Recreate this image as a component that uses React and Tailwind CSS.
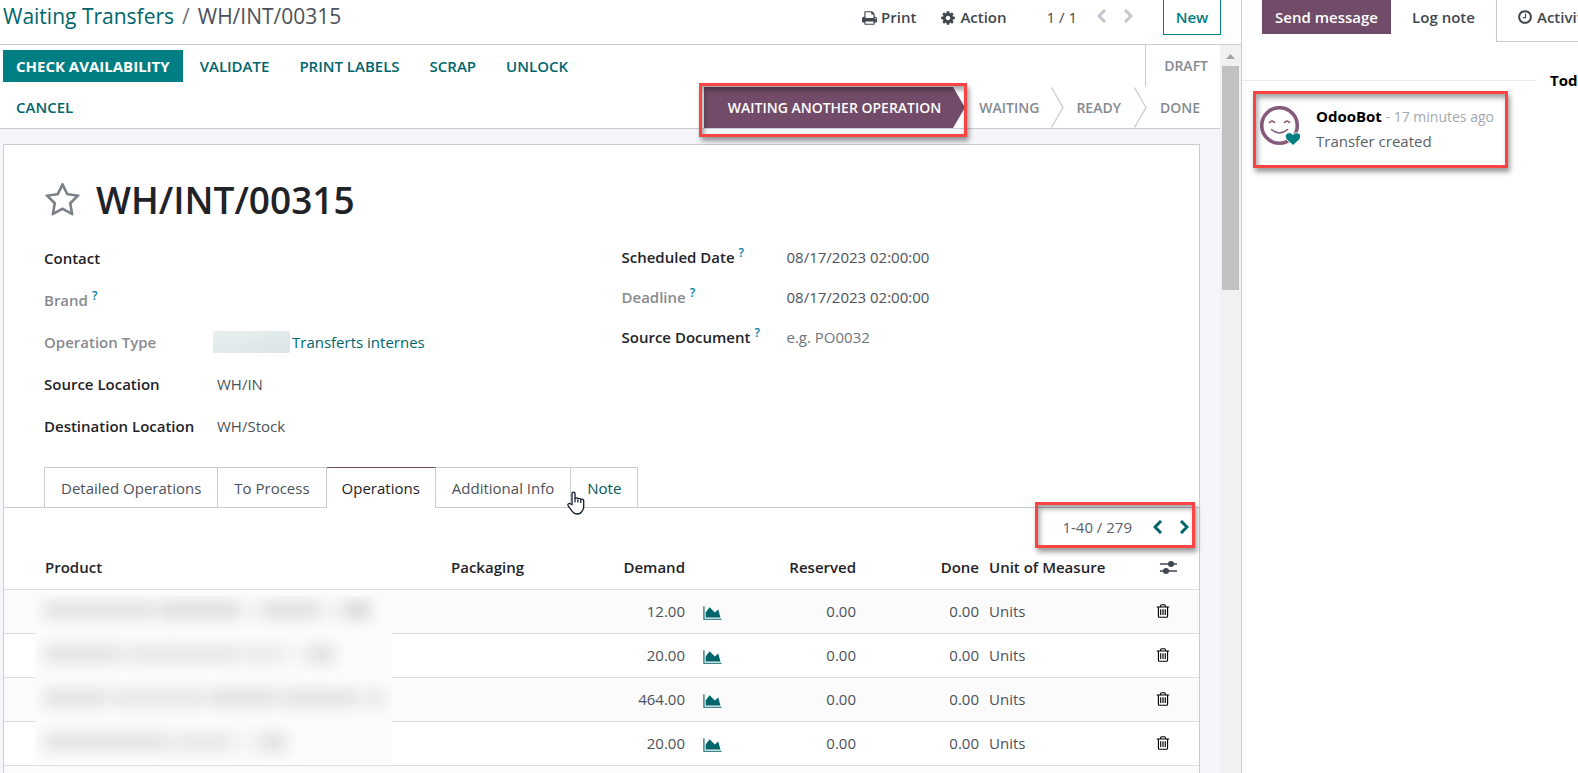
const PATHS = {
    print: 'M384 1536h896v-256h-896v256zm0-640h896v-384h-160q-40 0-68-28t-28-68v-160h-640v640zm1152 64q0-26-19-45t-45-19-45 19-19 45 19 45 45 19 45-19 19-45zm128 0v416q0 13-9.5 22.5t-22.5 9.5h-224v160q0 40-28 68t-68 28h-960q-40 0-68-28t-28-68v-160h-224q-13 0-22.5-9.5t-9.5-22.5v-416q0-79 56.5-135.5t135.5-56.5h64v-544q0-40 28-68t68-28h672q40 0 88 20t76 48l152 152q28 28 48 76t20 88v256h64q79 0 135.5 56.5t56.5 135.5z',
    cog: 'M1152 896q0-106-75-181t-181-75-181 75-75 181 75 181 181 75 181-75 75-181zm512-109v222q0 12-8 23t-20 13l-185 28q-19 54-39 91 35 50 107 138 10 12 10 25t-9 23q-27 37-99 108t-94 71q-12 0-26-9l-138-108q-44 23-91 38-16 136-29 186-7 28-36 28h-222q-14 0-24.5-8.5t-11.5-21.5l-28-184q-49-16-90-37l-141 107q-10 9-25 9-14 0-25-11-126-114-165-168-7-10-7-23 0-12 8-23 15-21 51-66.5t54-70.5q-27-50-41-99l-183-27q-13-2-21-12.5t-8-23.5v-222q0-12 8-23t19-13l186-28q14-46 39-92-40-57-107-138-10-12-10-24 0-10 9-23 26-36 98.5-107.5t94.5-71.5q13 0 26 10l138 107q44-23 91-38 16-136 29-186 7-28 36-28h222q14 0 24.5 8.5t11.5 21.5l28 184q49 16 90 37l142-107q9-9 24-9 13 0 25 10 129 119 165 170 7 8 7 22 0 12-8 23-15 21-51 66.5t-54 70.5q26 50 41 98l183 28q13 2 21 12.5t8 23.5z',
    star: 'M1201 1004l306-297-422-62-189-382-189 382-422 62 306 297-73 421 378-199 377 199zm527-357q0 22-26 48l-363 354 86 500q1 7 1 20 0 50-41 50-19 0-40-12l-449-236-449 236q-22 12-40 12-21 0-31.5-14.5t-10.5-35.5q0-6 2-20l86-500-364-354q-25-27-25-48 0-37 56-46l502-73 225-455q19-41 49-41t49 41l225 455 502 73q56 9 56 46z',
    clock: 'M1024 544v448q0 14-9 23t-23 9h-320q-14 0-23-9t-9-23v-64q0-14 9-23t23-9h224v-352q0-14 9-23t23-9h64q14 0 23 9t9 23zm416 352q0-148-73-273t-198-198-273-73-273 73-198 198-73 273 73 273 198 198 273 73 273-73 198-198 73-273zm224 0q0 209-103 385.5t-279.5 279.5-385.5 103-385.5-103-279.5-279.5-103-385.5 103-385.5 279.5-279.5 385.5-103 385.5 103 279.5 279.5 103 385.5z',
    area: 'M2048 1536v128h-2048v-1536h128v1408h1920zm-384-1024l256 896h-1664v-576l448-576 576 576z',
    trash: 'M704 736v576q0 14-9 23t-23 9h-64q-14 0-23-9t-9-23v-576q0-14 9-23t23-9h64q14 0 23 9t9 23zm256 0v576q0 14-9 23t-23 9h-64q-14 0-23-9t-9-23v-576q0-14 9-23t23-9h64q14 0 23 9t9 23zm256 0v576q0 14-9 23t-23 9h-64q-14 0-23-9t-9-23v-576q0-14 9-23t23-9h64q14 0 23 9t9 23zm128 724v-948h-896v948q0 22 7 40.5t14.5 27 10.5 8.5h832q3 0 10.5-8.5t14.5-27 7-40.5zm-672-1076h448l-48-117q-7-9-17-11h-317q-10 2-17 11zm928 32v64q0 14-9 23t-23 9h-96v948q0 83-47 143.5t-113 60.5h-832q-66 0-113-58.5t-47-141.5v-952h-96q-14 0-23-9t-9-23v-64q0-14 9-23t23-9h309l70-167q15-37 54-63t79-26h320q40 0 79 26t54 63l70 167h309q14 0 23 9t9 23z',
};

const Icon = ({ name, box = '0 0 1792 1792', className }) => (
    <svg viewBox={box} fill="currentColor" className={className} aria-hidden="true">
        <path d={PATHS[name]} />
    </svg>
);

const Chevron = ({ right }) => (
    <svg viewBox="0 0 10 14" className="w-[10px] h-[14px]" fill="none" stroke="currentColor" strokeWidth="3" aria-hidden="true">
        <path d={right ? 'M2 1 L8 7 L2 13' : 'M8 1 L2 7 L8 13'} />
    </svg>
);

const StageArrow = () => (
    <svg viewBox="0 0 13 41" className="w-[13px] h-[41px] shrink-0" fill="none" stroke="#c9ccd2" strokeWidth="1.3" aria-hidden="true">
        <path d="M0.5 0.5 L12 20.5 L0.5 40.5" />
    </svg>
);

// Red callout frame, drawn over whatever it surrounds
const Callout = ({ className }) => (
    <span className={`absolute border-3 border-[#fa4444] pointer-events-none shadow-[2px_4px_5px_rgba(0,0,0,0.4),inset_2px_4px_5px_rgba(0,0,0,0.35)] ${className}`} />
);

const Help = () => <sup className="ml-1 -top-[6px] text-[12px] text-[#0180a5]">?</sup>;

const Label = ({ id, muted, help, children }) => (
    <label htmlFor={id} className={muted ? 'font-semibold text-[#888b90]' : 'font-semibold text-[#1f2328]'}>
        {children}
        {help && <Help />}
    </label>
);

const inputClass = 'w-full bg-transparent outline-none text-[#4c525a] placeholder:text-[#6f747b]';

const ACTIONS = ['Validate', 'Print Labels', 'Scrap', 'Unlock', 'Cancel'];

const TABS = ['Detailed Operations', 'To Process', 'Operations', 'Additional Info', 'Note'];

const LINES = [
    { demand: '12.00' },
    { demand: '20.00' },
    { demand: '464.00' },
    { demand: '20.00' },
];

function ControlBar() {
    return (
        <header className="h-[45px] shrink-0 flex items-start border-b border-[#c9ccd2] bg-white">
            <nav className="flex pl-[3px] text-[21px] leading-8 whitespace-nowrap">
                <a href="#transfers" className="text-[#01666b]">Waiting Transfers</a>
                <span className="px-2 text-[#6f747b]">/</span>
                <span className="text-[#4c525a]">WH/INT/00315</span>
            </nav>
            <div className="ml-auto mr-5 flex items-start font-semibold text-[#41474f] leading-[35px]">
                <button className="flex items-center gap-1 mr-6">
                    <Icon name="print" box="0 0 1664 1792" className="w-[15px] h-4" />
                    Print
                </button>
                <button className="flex items-center gap-1 mr-10">
                    <Icon name="cog" className="w-4 h-4" />
                    Action
                </button>
                <span className="font-normal mr-5">1 / 1</span>
                <div className="flex gap-4 h-8 items-center mr-[30px] text-[#c3c6cc]">
                    <button aria-label="Previous record"><Chevron /></button>
                    <button aria-label="Next record"><Chevron right /></button>
                </div>
                <button className="h-[35px] w-[58px] border border-t-0 border-[#017e84] text-[#017e84]">New</button>
            </div>
        </header>
    );
}

function StatusBar() {
    return (
        <div className="flex justify-between border-b border-[#c9ccd2] bg-white text-[15px] uppercase">
            <div className="flex flex-wrap content-start gap-y-[9px] gap-x-1 pt-[5px] pl-[3px] w-[640px] font-semibold text-[#01666b]">
                <button className="h-8 px-[13px] bg-[#017e84] text-white font-bold uppercase">Check Availability</button>
                {ACTIONS.map((a) => (
                    <button key={a} className="h-8 px-[13px] uppercase">{a}</button>
                ))}
            </div>
            <div className="flex flex-col items-end text-[14px] font-semibold text-[#858a91]">
                <button className="h-[42px] pl-[18px] pr-3 border-l border-[#c9ccd2] uppercase">Draft</button>
                <div className="flex h-[41px] items-center">
                    <div className="relative flex h-full">
                        <button className="h-full pl-6 pr-3 bg-[#714b67] text-white uppercase">
                            Waiting Another Operation
                        </button>
                        <svg viewBox="0 0 12 41" className="w-3 h-[41px]" fill="#714b67" aria-hidden="true">
                            <path d="M0 0 L12 20.5 L0 41 Z" />
                        </svg>
                        <Callout className="-left-[5px] -right-[2px] -top-1 -bottom-[9px]" />
                    </div>
                    <button className="pl-[14px] pr-3 uppercase">Waiting</button>
                    <StageArrow />
                    <button className="pl-3 pr-[13px] uppercase">Ready</button>
                    <StageArrow />
                    <button className="pl-[13px] pr-5 uppercase">Done</button>
                </div>
            </div>
        </div>
    );
}

function Fields() {
    return (
        <div className="grid grid-cols-2 px-10 pt-2 h-[238px]">
            <div className="grid grid-cols-[173px_1fr] auto-rows-[42px] items-center content-start">
                <Label id="contact">Contact</Label>
                <input id="contact" className={inputClass} />
                <Label id="brand" muted help>Brand</Label>
                <input id="brand" className={inputClass} />
                <Label id="optype" muted>Operation Type</Label>
                <div className="flex items-center gap-[2px] -ml-1">
                    <span className="w-[77px] h-[22px] rounded-xs bg-linear-to-br from-[#e9efef] to-[#dae5e6]" />
                    <a id="optype" href="#type" className="text-[#01666b]">Transferts internes</a>
                </div>
                <Label id="source">Source Location</Label>
                <input id="source" className={inputClass} defaultValue="WH/IN" />
                <Label id="dest">Destination Location</Label>
                <input id="dest" className={inputClass} defaultValue="WH/Stock" />
            </div>
            <div className="grid grid-cols-[165px_1fr] auto-rows-[40px] items-center content-start pl-5">
                <Label id="scheduled" help>Scheduled Date</Label>
                <input id="scheduled" className={inputClass} defaultValue="08/17/2023 02:00:00" />
                <Label id="deadline" muted help>Deadline</Label>
                <input id="deadline" className={inputClass} defaultValue="08/17/2023 02:00:00" readOnly />
                <Label id="origin" help>Source Document</Label>
                <input id="origin" className={inputClass} placeholder="e.g. PO0032" />
            </div>
        </div>
    );
}

function Tabs() {
    return (
        <div className="flex h-[41px] pl-10 border-b border-[#c9ccd2]">
            {TABS.map((tab) => {
                const active = tab === 'Operations';
                return (
                    <button
                        key={tab}
                        className={
                            active
                                ? 'relative h-[41px] px-[15px] bg-white border-t border-t-[#714b67] border-r border-r-[#c9ccd2] text-[#1f2328]'
                                : tab === 'Note'
                                    ? 'relative px-4 border-t border-r border-[#c9ccd2] text-[#01585c]'
                                    : 'relative px-4 border-t border-r border-[#c9ccd2] first:border-l text-[#4c525a]'
                        }
                    >
                        {tab}
                        {tab === 'Note' && <HandCursor />}
                    </button>
                );
            })}
        </div>
    );
}

const HandCursor = () => (
    <svg viewBox="0 0 18 24" className="absolute -left-1 top-[23px] w-[18px] h-6" aria-hidden="true">
        <path
            d="M5 13.500V2.600C5 0.500 8 0.500 8 2.600V8c0-1.500 2.900-1.500 2.900.3 0-1.400 2.900-1.300 2.900.6 0-1.300 2.900-1.100 2.900.9v6c0 2-.8 3.200-1.700 4.500-1 1.700-2.600 2.700-5 2.700-2.200 0-3.500-.8-4.800-2.600L1.200 14.800C.2 13 2.300 11.700 3.600 13Z"
            fill="#fff"
            stroke="#111827"
            strokeWidth="1.3"
        />
        <path d="M8 8v3.500M10.900 8.500v3M13.800 9v3" stroke="#111827" strokeWidth="1.200" />
    </svg>
);

// Product names are hidden behind a soft mask
const ProductMask = () => (
    <div className="absolute left-[31px] top-[50px] w-[357px] h-[167px] overflow-hidden bg-[#fcfcfc]" aria-hidden="true">
        <div className="flex flex-col gap-6 pl-2 pt-1 blur-[7px]">
            <div className="flex gap-1 h-5"><i className="w-28 bg-[#e3e4e5]" /><i className="w-20 bg-[#dfe0e1]" /><i className="w-4 bg-[#f0f0f0]" /><i className="w-14 bg-[#e0e1e2]" /><i className="w-4 bg-[#f0f0f0]" /><i className="w-7 bg-[#dadcde]" /></div>
            <div className="flex gap-1 h-5"><i className="w-20 bg-[#e4e5e6]" /><i className="w-28 bg-[#e7e8e9]" /><i className="w-10 bg-[#e9eaea]" /><i className="w-4 bg-[#f3f3f3]" /><i className="w-7 bg-[#e0e2e5]" /></div>
            <div className="flex gap-1 h-5"><i className="w-16 bg-[#e3e4e5]" /><i className="w-24 bg-[#e6e7e8]" /><i className="w-16 bg-[#e1e2e4]" /><i className="w-20 bg-[#e3e5e7]" /><i className="w-6 bg-[#eaeaeb]" /></div>
            <div className="flex gap-1 h-5"><i className="w-32 bg-[#e4e5e6]" /><i className="w-14 bg-[#e7e8e9]" /><i className="w-5 bg-[#f3f3f3]" /><i className="w-7 bg-[#e0e2e4]" /></div>
        </div>
    </div>
);

function Operations() {
    return (
        <>
            <div className="flex justify-end h-[38px] pr-1">
                <div className="relative flex items-center h-[38px] pl-[27px] pr-[6px] text-[#5b6168]">
                    <span className="mr-[21px]">1-40 / 279</span>
                    <div className="flex gap-4 text-[#01666b]">
                        <button aria-label="Previous page"><Chevron /></button>
                        <button aria-label="Next page"><Chevron right /></button>
                    </div>
                    <Callout className="left-0 right-0 -top-[6px] bottom-[-2px]" />
                </div>
            </div>
            <div className="relative">
                <table className="w-full table-fixed">
                    <colgroup>
                        <col />
                        <col className="w-[150px]" />
                        <col className="w-[100px]" />
                        <col className="w-[40px]" />
                        <col className="w-[131px]" />
                        <col className="w-[120px]" />
                        <col className="w-[158px]" />
                        <col className="w-[57px]" />
                    </colgroup>
                    <thead>
                        <tr className="h-[43px] border-b border-[#dcdee1] text-[#1f2328] text-left *:font-semibold">
                            <th className="pl-[41px]">Product</th>
                            <th className="pl-2">Packaging</th>
                            <th className="pr-2 text-right">Demand</th>
                            <th></th>
                            <th className="pr-2 text-right">Reserved</th>
                            <th className="pr-[5px] text-right">Done</th>
                            <th className="pl-[5px]">Unit of Measure</th>
                            <th className="pl-[18px]">
                                <button aria-label="Optional columns" className="block">
                                    <svg viewBox="0 0 17 14" className="w-[17px] h-[14px]" aria-hidden="true">
                                        <path d="M0 4h17M0 11h17" stroke="#41474f" strokeWidth="1.300" />
                                        <circle cx="11" cy="4" r="3" fill="#41474f" />
                                        <circle cx="6" cy="11" r="3" fill="#41474f" />
                                    </svg>
                                </button>
                            </th>
                        </tr>
                    </thead>
                    <tbody>
                        {LINES.map((line, i) => (
                            <tr key={i} className="h-[44px] border-b border-[#dcdee1] odd:bg-[#fbfbfb] text-[#4c525a]">
                                <td></td>
                                <td></td>
                                <td className="pr-2 text-right">{line.demand}</td>
                                <td className="pl-[10px]">
                                    <button aria-label="Forecast" className="block pt-1 text-[#01666b]">
                                        <Icon name="area" box="0 0 2048 1792" className="w-[19px] h-4" />
                                    </button>
                                </td>
                                <td className="pr-2 text-right">0.00</td>
                                <td className="pr-[5px] text-right">0.00</td>
                                <td className="pl-[5px]">Units</td>
                                <td className="pl-[13px]">
                                    <button aria-label="Delete line" className="block text-black">
                                        <Icon name="trash" className="w-4 h-4" />
                                    </button>
                                </td>
                            </tr>
                        ))}
                        <tr className="h-[44px] bg-[#fbfbfb]">
                            <td colSpan={8}></td>
                        </tr>
                    </tbody>
                </table>
                <ProductMask />
            </div>
        </>
    );
}

const Scrollbar = () => (
    <div className="w-[21px] shrink-0 bg-[#f1f1f1] flex flex-col items-center">
        <svg viewBox="0 0 21 21" className="w-[21px] h-[21px]" aria-hidden="true">
            <path d="M6 14 L10.500 9 L15 14 Z" fill="#a3a3a3" />
        </svg>
        <div className="w-[17px] h-[224px] bg-[#c1c1c1]" />
    </div>
);

function Chatter() {
    return (
        <aside className="w-[337px] shrink-0 overflow-hidden border-l border-[#c9ccd2] bg-white">
            <div className="flex h-[42px] pl-5 font-semibold text-[#41474f] whitespace-nowrap">
                <button className="h-[34px] w-[129px] shrink-0 bg-[#714b67] text-white">Send message</button>
                <button className="h-[34px] w-[105px] shrink-0">Log note</button>
                <button className="flex items-center gap-1 h-[42px] pl-5 pb-2 border-l border-b border-[#c9ccd2] shrink-0">
                    <Icon name="clock" className="w-4 h-4" />
                    Activities
                </button>
            </div>
            <div className="flex items-center mt-[26px] h-6 whitespace-nowrap">
                <hr className="w-[294px] shrink-0 border-[#e8eaed]" />
                <span className="pl-[14px] font-bold text-black">Today</span>
            </div>
            <div className="relative flex ml-[11px] -mt-px w-[255px] h-[77px] pl-[7px] pt-[13px]">
                <svg viewBox="0 0 40 40" className="w-10 h-10 mt-[2px] shrink-0" fill="none" role="img" aria-label="OdooBot">
                    <circle cx="19.500" cy="19.500" r="17.800" stroke="#875a7b" strokeWidth="3.600" />
                    <path d="M9.500 16.500q2.500-2.800 5 0M24.500 16.500q2.500-2.800 5 0M11.500 23.500q8 7 16 0" stroke="#875a7b" strokeWidth="1.600" strokeLinecap="round" />
                    <path d="M33 39.500L26.500 33.500C22.500 28.500 29.500 24 33 28.700c3.500-4.700 10.500-.2 6.500 4.800Z" fill="#017e84" stroke="#fff" strokeWidth="1" />
                </svg>
                <div className="pl-4 leading-6 whitespace-nowrap">
                    <div>
                        <strong className="font-bold text-black">OdooBot</strong>
                        <span className="text-[14px] text-[#a5a8ad]"> - 17 minutes ago</span>
                    </div>
                    <p className="text-[#5b6168]">Transfer created</p>
                </div>
                <Callout className="inset-0" />
            </div>
        </aside>
    );
}

export default function App() {
    return (
        <div className="flex h-screen overflow-hidden bg-white font-['Open_Sans',sans-serif] text-[15px] leading-[22px]">
            <main className="flex-1 min-w-0 flex flex-col">
                <ControlBar />
                <div className="flex flex-1 min-h-0">
                    <div className="flex-1 min-w-0 overflow-hidden bg-[#f5f6fa]">
                        <StatusBar />
                        <div className="mt-[15px] ml-[3px] mr-5 border border-[#c9ccd2] bg-white">
                            <div className="flex items-center gap-[15px] pl-10 pt-[26px] h-[84px]">
                                <button aria-label="Favorite" className="text-[#7c8188]">
                                    <Icon name="star" className="w-[37px] h-[37px]" />
                                </button>
                                <h1 className="text-[37px] leading-[58px] font-semibold text-[#1f2328]">WH/INT/00315</h1>
                            </div>
                            <Fields />
                            <Tabs />
                            <Operations />
                        </div>
                    </div>
                    <Scrollbar />
                </div>
            </main>
            <Chatter />
        </div>
    );
}
